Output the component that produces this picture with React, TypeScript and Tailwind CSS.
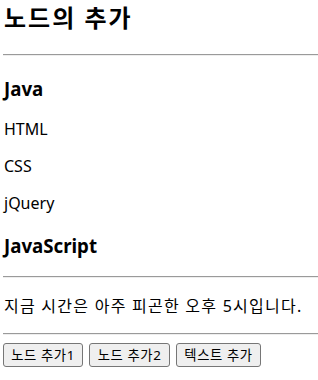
export default function App() {
  return (
    <div className="w-[318px] h-[380px] bg-white text-black pl-[3px] overflow-hidden [font-family:'Noto_Sans','Noto_Sans_CJK_KR',sans-serif]">
      <h2 className="text-[24px] font-bold leading-[32px] mt-[2px] pl-[1px] tracking-[2px]">노드의 추가</h2>
      <div className="mt-[20px] h-[2px] border-t border-b border-t-[#9a9a9a] border-b-[#eeeeee]" />
      <h3 className="text-[18.7px] font-bold leading-[25px] mt-[20px] pl-[1px]">Java</h3>
      <p className="text-[16px] leading-[21px] mt-[18px] pl-[1px]">HTML</p>
      <p className="text-[16px] leading-[21px] mt-[16px] pl-[1px]">CSS</p>
      <p className="text-[16px] leading-[21px] mt-[16px] pl-[1px]">jQuery</p>
      <h3 className="text-[18.7px] font-bold leading-[25px] mt-[19px] pl-[1px]">JavaScript</h3>
      <div className="mt-[18px] h-[2px] border-t border-b border-t-[#9a9a9a] border-b-[#eeeeee]" />
      <p className="text-[16px] leading-[21px] mt-[18px] pl-[1px] tracking-[1.25px]">지금 시간은 아주 피곤한 오후 5시입니다.</p>
      <div className="mt-[16px] h-[2px] border-t border-b border-t-[#9a9a9a] border-b-[#eeeeee]" />
      <div className="mt-[8px] flex gap-[6px]">
        <button className="w-[80px] h-[24px] text-[13.33px] leading-[20px] tracking-[0.6px] bg-[#efefef] border border-[#767676] rounded-[3px]">노드 추가1</button>
        <button className="w-[81px] h-[24px] text-[13.33px] leading-[20px] tracking-[0.6px] bg-[#efefef] border border-[#767676] rounded-[3px]">노드 추가2</button>
        <button className="w-[85px] h-[24px] text-[13.33px] leading-[20px] tracking-[0.6px] bg-[#efefef] border border-[#767676] rounded-[3px]">텍스트 추가</button>
      </div>
    </div>
  );
}
